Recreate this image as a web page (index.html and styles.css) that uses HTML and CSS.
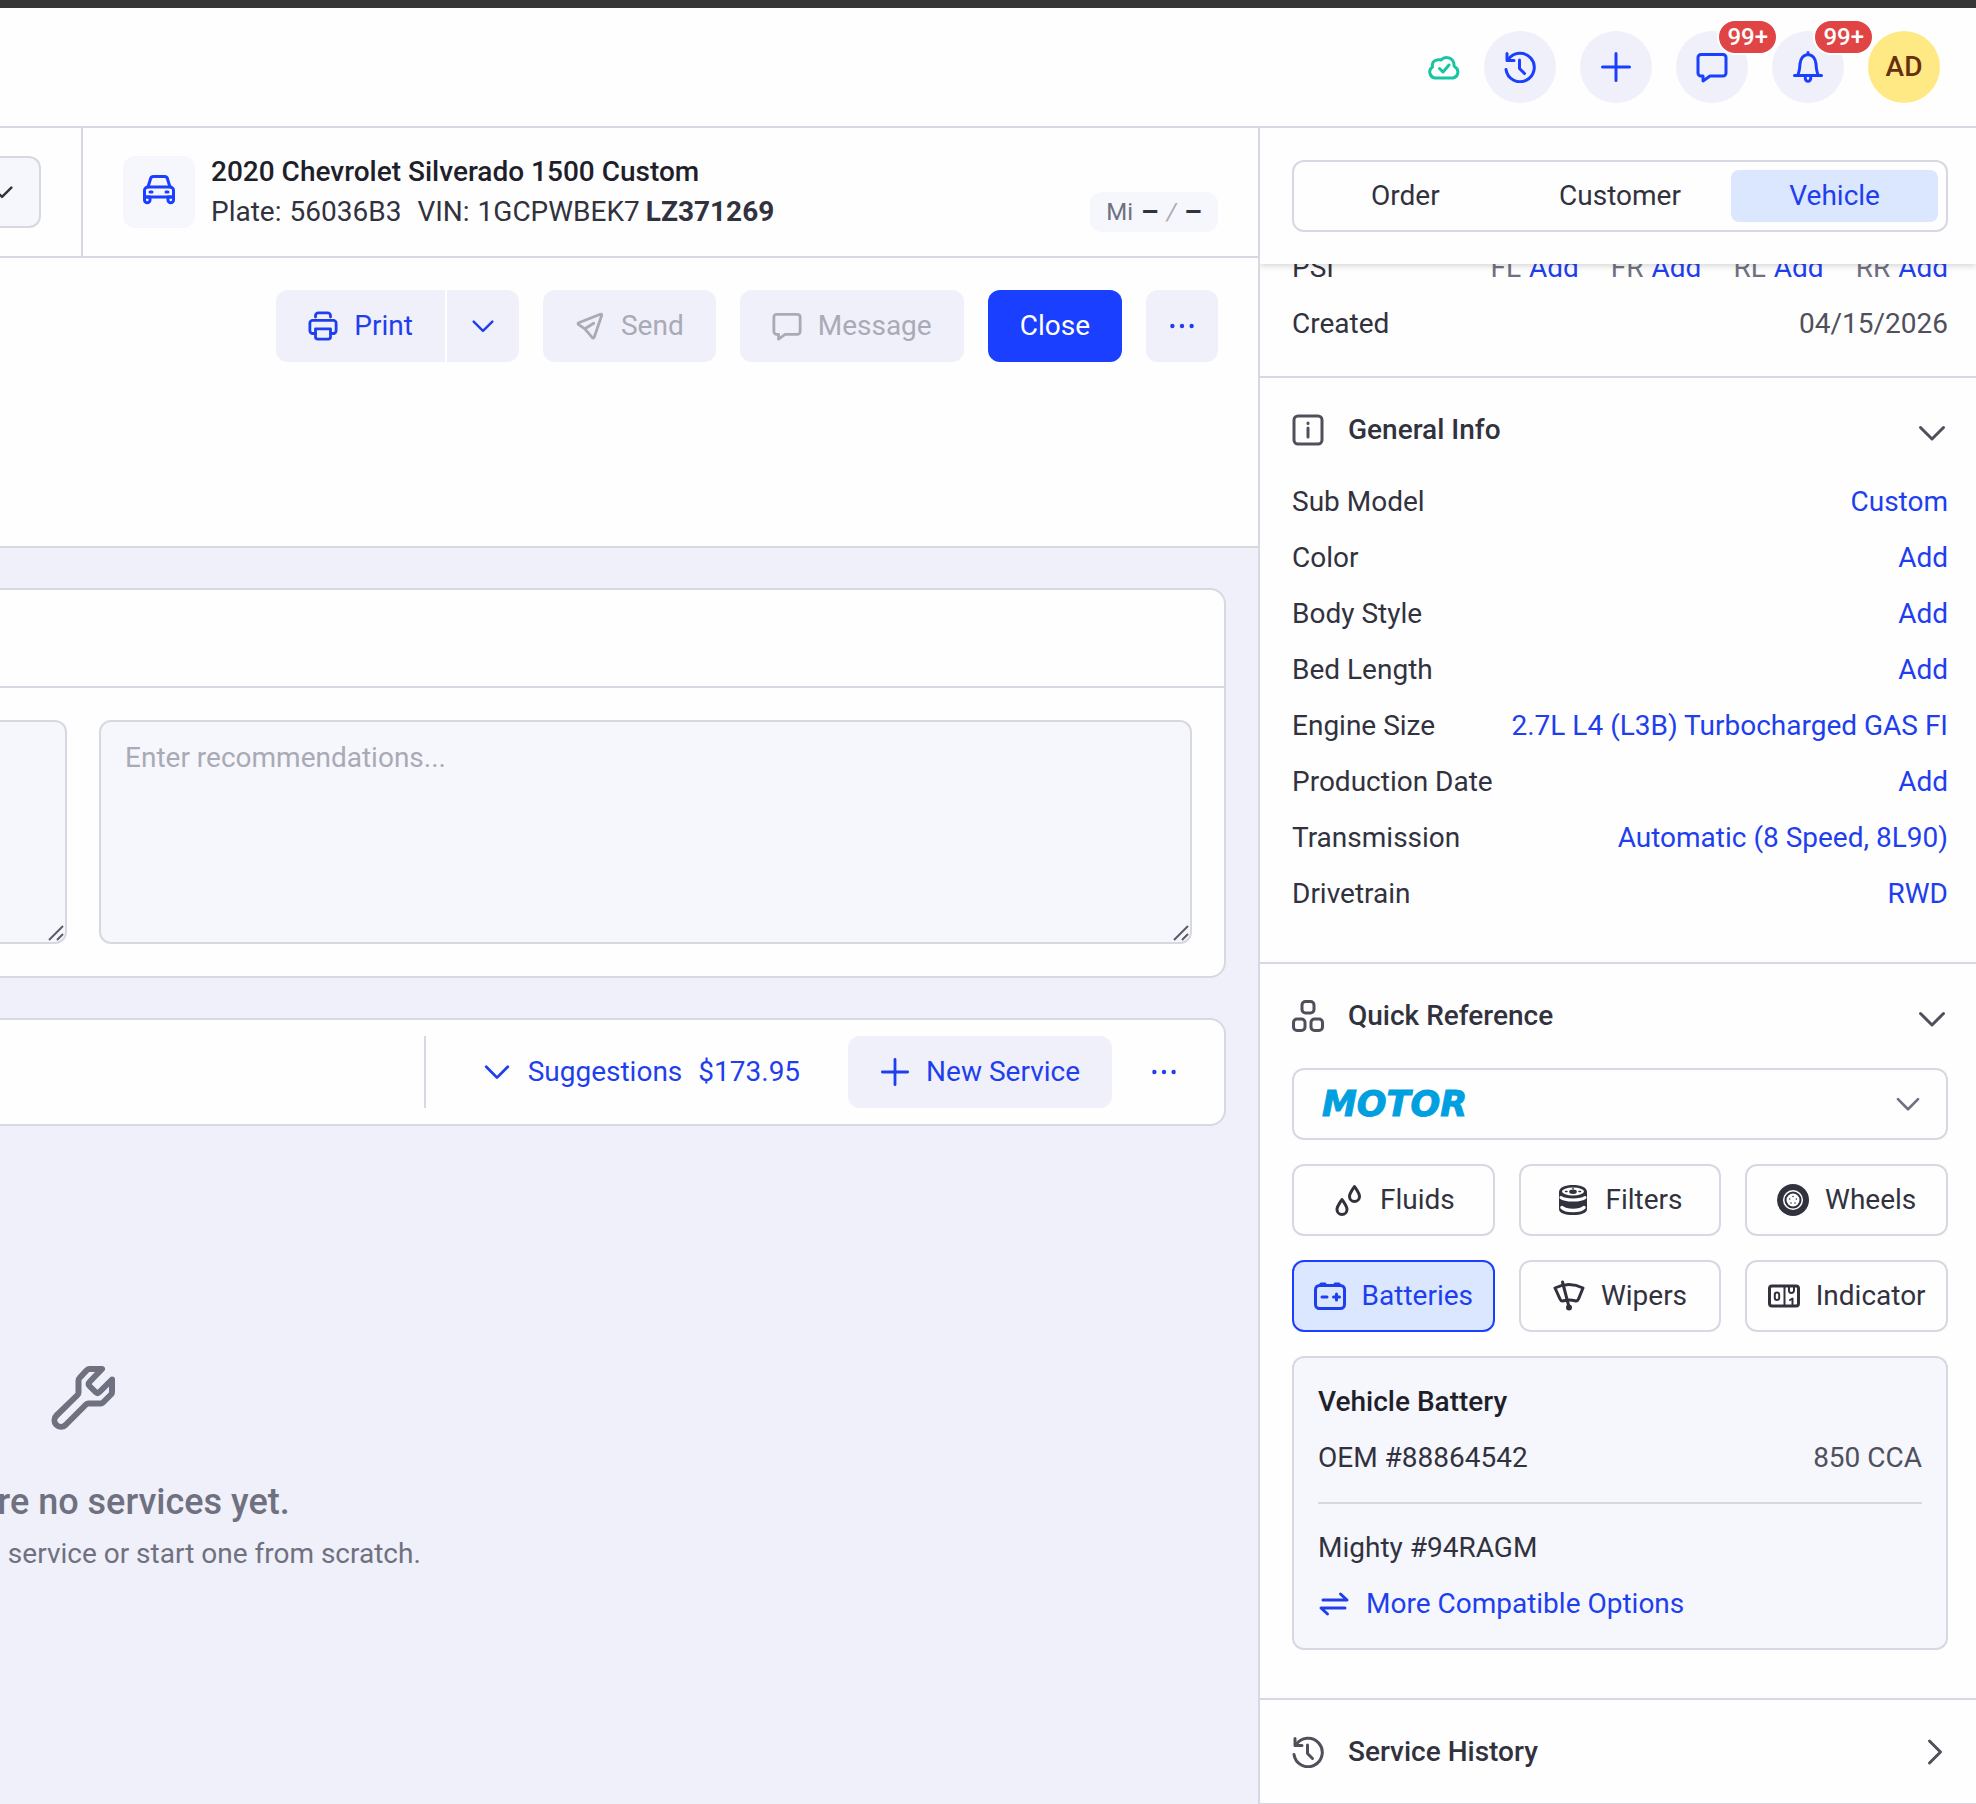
FILE: index.html
```html
<!DOCTYPE html>
<html lang="en">
<head>
<meta charset="utf-8">
<meta name="viewport" content="width=device-width, initial-scale=1">
<title>Order</title>
<link rel="stylesheet" href="styles.css">
</head>
<body>
<svg class="sprite" aria-hidden="true">
  <symbol id="i-cloud" viewBox="0 0 32 32"><path d="M8 27A6 6 0 0 1 4.500 16Q3.500 9.500 10 8.800Q12 8.500 13 9A7.500 7.500 0 0 1 26 13Q25.500 15 27 16A6 6 0 0 1 25 27Z"/><path d="M11.500 17.500l3.500 3.500 6-7"/></symbol>
  <symbol id="i-history" viewBox="0 0 32 32"><path d="M2 18.500A14.200 14.200 0 1 0 4 9"/><path d="M3 2.500V9.500H10"/><path d="M15.500 9v8.500l5 5"/></symbol>
  <symbol id="i-plus" viewBox="0 0 32 32"><path d="M16 2.500v27M2.500 16h27"/></symbol>
  <symbol id="i-chat" viewBox="0 0 32 32"><path d="M5 3.500H27A3 3 0 0 1 30 6.500V22A3 3 0 0 1 27 25H14L7 30V25H5A3 3 0 0 1 2 22V6.500A3 3 0 0 1 5 3.500Z"/></symbol>
  <symbol id="i-bell" viewBox="0 0 32 32"><path d="M2.500 24.500H29.500"/><path d="M16 1.500V3.500C11 4 8.500 8 8 13C7.700 18 7.500 21 5.500 24.500M16 3.500C21 4 23.500 8 24 13C24.300 18 24.500 21 26.500 24.500"/><path d="M13.300 25v2.500a2.700 2.700 0 0 0 5.400 0V25"/></symbol>
  <symbol id="i-chevron" viewBox="0 0 32 32"><path d="M4.500 10.500 16 22 27.500 10.500"/></symbol>
  <symbol id="i-chevron-right" viewBox="0 0 32 32"><path d="M13.500 5 24.500 16 13.500 27"/></symbol>
  <symbol id="i-car" viewBox="0 0 32 32"><path d="M5 13 7.500 5A3 3 0 0 1 10.500 2.500H21.500A3 3 0 0 1 24.500 5L27 13"/><path d="M5 13H27A3.500 3.500 0 0 1 30.500 16.500V23H1.500V16.500A3.500 3.500 0 0 1 5 13Z"/><path d="M7 18h2M23 18h2"/><path d="M1.500 23H7V26a2.700 2.700 0 0 1-5.500 0ZM25 23h5.500V26a2.700 2.700 0 0 1-5.500 0Z"/></symbol>
  <symbol id="i-printer" viewBox="0 0 32 32"><path d="M8 6.500V5A3 3 0 0 1 11 2H21A3 3 0 0 1 24 5V6.500"/><path d="M8 24H5A3 3 0 0 1 2 21V13A3 3 0 0 1 5 10H27A3 3 0 0 1 30 13V21A3 3 0 0 1 27 24H24"/><path d="M8 19H24V27.500A2.500 2.500 0 0 1 21.500 30H10.500A2.500 2.500 0 0 1 8 27.500Z"/></symbol>
  <symbol id="i-send" viewBox="0 0 32 32"><path d="M27 3.500 4 12.500Q2.500 13.500 4 14.500L10.500 19 18.500 28.500Q19.800 29.500 20.500 28L28.500 4.500Q28.500 3 27 3.500ZM10.500 19 20 13"/></symbol>
  <symbol id="i-dots" viewBox="0 0 32 32"><g fill="currentColor" stroke="none"><circle cx="5" cy="16" r="2.500"/><circle cx="16" cy="16" r="2.500"/><circle cx="27" cy="16" r="2.500"/></g></symbol>
  <symbol id="i-wrench" viewBox="0 0 64 64"><path d="M51 3H38.500Q37 3 36 4L28.500 12Q27.500 13 27.500 14.500V26.500Q27.500 28 26.500 29L5.500 49.500A6.400 6.400 0 0 0 14.500 59L35 38.500Q36 37.500 37.500 37.500H49.500Q51 37.500 52 36.500L60 28.500Q61 27.500 61 26V13.500L48.500 26Q46.500 28 44.500 26L38.500 20Q36.500 18 38.500 16Z"/></symbol>
  <symbol id="i-info" viewBox="0 0 32 32"><rect x="2" y="2" width="28" height="28" rx="4"/><path d="M16 14v9M16 9v.500"/></symbol>
  <symbol id="i-blocks" viewBox="0 0 32 32"><rect x="10" y="1.500" width="12" height="11.500" rx="3.500"/><rect x="1.500" y="19" width="11.500" height="11.500" rx="3.500"/><rect x="19" y="19" width="11.500" height="11.500" rx="3.500"/></symbol>
  <symbol id="i-drops" viewBox="0 0 32 32"><path d="M22.500 2.500C19.500 7 17.500 9.500 17.500 12.500A5 5 0 0 0 27.500 12.500C27.500 9.500 25.500 7 22.500 2.500Z"/><path d="M10 15.500C7 20 5 22.500 5 25.500A5 5 0 0 0 15 25.500C15 22.500 13 20 10 15.500Z"/></symbol>
  <symbol id="i-filter" viewBox="0 0 32 32"><path fill="currentColor" stroke="none" d="M2 8C2 3.500 8 1 16 1S30 3.500 30 8V25C30 29 24 31 16 31S2 29 2 25Z"/><ellipse cx="16" cy="7.500" rx="11" ry="4" fill="#fff" stroke="none"/><ellipse cx="16" cy="7.800" rx="3.800" ry="2.200" fill="currentColor" stroke="none"/><path stroke-width="1.500" d="M8.500 7.500h1.500M22 7.500h1.500M16 4.200v.500"/><path stroke="#fff" stroke-width="3" d="M4 13.500C8 16.800 24 16.800 28 13.500"/><path stroke="#fff" stroke-width="3.500" d="M5 23.500C9 27.500 23 27.500 27 23.500"/></symbol>
  <symbol id="i-wheel" viewBox="0 0 32 32"><circle cx="16" cy="16" r="16" fill="currentColor" stroke="none"/><circle cx="16" cy="16" r="9.300" stroke="#fff" stroke-width="1.500"/><circle cx="16" cy="16" r="6.500" fill="#fff" stroke="none"/><g fill="currentColor" stroke="none"><circle cx="16" cy="12.500" r=".8"/><circle cx="12.700" cy="15" r=".8"/><circle cx="19.300" cy="15" r=".8"/><circle cx="14" cy="19" r=".8"/><circle cx="18" cy="19" r=".8"/></g></symbol>
  <symbol id="i-battery" viewBox="0 0 32 32"><rect x="1.500" y="5.500" width="29" height="23" rx="4"/><path d="M7 4h4M21 4h4M8 17h5M19.500 17h6M22.500 14v6"/></symbol>
  <symbol id="i-wiper" viewBox="0 0 32 32"><path d="M2 8Q16 1 30 8L25.500 19Q24.500 21.500 22 20.800Q16 19 10.500 20.800Q8 21.500 7 19Z"/><path d="M9.500 2 16 27"/><circle cx="16" cy="27.500" r="3" fill="currentColor" stroke="none"/></symbol>
  <symbol id="i-counter" viewBox="0 0 32 32"><rect x="1.500" y="6" width="29" height="20" rx="2.500"/><path stroke-width="2" d="M16.500 6V26"/><rect stroke-width="2" x="6.800" y="12.500" width="4.400" height="7.500" rx="2.200"/><path stroke-width="2" d="M21 6v4.500a2.500 2.500 0 0 0 5 0V6M22 20l2.500-1.500V26"/></symbol>
  <symbol id="i-swap" viewBox="0 0 32 32"><path d="M5 12H29L22.500 6M27 20H3L9.500 26"/></symbol>
</svg>

<div class="app">
  <header class="topbar">
    <svg class="icon sync"><use href="#i-cloud"/></svg>
    <button class="round" aria-label="Recent"><svg class="icon"><use href="#i-history"/></svg></button>
    <button class="round" aria-label="Create"><svg class="icon"><use href="#i-plus"/></svg></button>
    <button class="round" aria-label="Messages"><svg class="icon"><use href="#i-chat"/></svg><span class="badge">99+</span></button>
    <button class="round" aria-label="Notifications"><svg class="icon"><use href="#i-bell"/></svg><span class="badge">99+</span></button>
    <button class="round avatar">AD</button>
  </header>

  <div class="workspace">
    <main class="main">
      <div class="context">
        <div class="context-customer">
          <button class="customer-toggle" aria-label="Change customer"><svg class="icon small"><use href="#i-chevron"/></svg></button>
        </div>
        <div class="context-vehicle">
          <span class="vehicle-icon"><svg class="icon"><use href="#i-car"/></svg></span>
          <div class="vehicle-text">
            <h1>2020 Chevrolet Silverado 1500 Custom</h1>
            <p><span class="pair"><span>Plate:</span><span>56036B3</span></span><span class="pair"><span>VIN:</span><span>1GCPWBEK7<b>LZ371269</b></span></span></p>
          </div>
          <div class="mileage">Mi <b>–</b><i>/</i><b>–</b></div>
        </div>
      </div>

      <div class="toolbar">
        <div class="split">
          <button class="btn"><svg class="icon"><use href="#i-printer"/></svg>Print</button>
          <button class="btn square" aria-label="Print options"><svg class="icon small"><use href="#i-chevron"/></svg></button>
        </div>
        <button class="btn" disabled><svg class="icon"><use href="#i-send"/></svg>Send</button>
        <button class="btn" disabled><svg class="icon"><use href="#i-chat"/></svg>Message</button>
        <button class="btn primary">Close</button>
        <button class="btn square" aria-label="More"><svg class="icon dots"><use href="#i-dots"/></svg></button>
      </div>

      <div class="canvas">
        <section class="card">
          <div class="card-head"></div>
          <div class="notes">
            <div class="note note-cut">
              <textarea aria-label="Concerns"></textarea>
              <svg class="grip" viewBox="0 0 16 16"><path d="M1 15 15 1M9 15l6-6"/></svg>
            </div>
            <div class="note">
              <textarea aria-label="Recommendations" placeholder="Enter recommendations..."></textarea>
              <svg class="grip" viewBox="0 0 16 16"><path d="M1 15 15 1M9 15l6-6"/></svg>
            </div>
          </div>
        </section>

        <section class="card services">
          <button class="suggestions"><svg class="icon"><use href="#i-chevron"/></svg><span>Suggestions</span><span>$173.95</span></button>
          <button class="btn"><svg class="icon"><use href="#i-plus"/></svg>New Service</button>
          <button class="btn square plain" aria-label="More"><svg class="icon dots"><use href="#i-dots"/></svg></button>
        </section>

        <div class="empty">
          <svg class="icon wrench"><use href="#i-wrench"/></svg>
          <h2>There are no services yet.</h2>
          <p>Browse for a canned service or start one from scratch.</p>
        </div>
      </div>
    </main>

    <aside class="panel">
      <div class="tabs">
        <div class="segmented">
          <button>Order</button>
          <button>Customer</button>
          <button class="active">Vehicle</button>
        </div>
      </div>

      <div class="panel-body">
        <section class="section first">
          <dl>
            <div><dt>PSI</dt><dd class="psi"><span class="pair">FL <a href="#">Add</a></span><span class="pair">FR <a href="#">Add</a></span><span class="pair">RL <a href="#">Add</a></span><span class="pair">RR <a href="#">Add</a></span></dd></div>
            <div><dt>Created</dt><dd>04/15/2026</dd></div>
          </dl>
        </section>

        <section class="section">
          <h3><svg class="icon"><use href="#i-info"/></svg><span>General Info</span><svg class="icon caret"><use href="#i-chevron"/></svg></h3>
          <dl>
            <div><dt>Sub Model</dt><dd><a href="#">Custom</a></dd></div>
            <div><dt>Color</dt><dd><a href="#">Add</a></dd></div>
            <div><dt>Body Style</dt><dd><a href="#">Add</a></dd></div>
            <div><dt>Bed Length</dt><dd><a href="#">Add</a></dd></div>
            <div><dt>Engine Size</dt><dd><a href="#">2.7L L4 (L3B) Turbocharged GAS FI</a></dd></div>
            <div><dt>Production Date</dt><dd><a href="#">Add</a></dd></div>
            <div><dt>Transmission</dt><dd><a href="#">Automatic (8 Speed, 8L90)</a></dd></div>
            <div><dt>Drivetrain</dt><dd><a href="#">RWD</a></dd></div>
          </dl>
        </section>

        <section class="section reference">
          <h3><svg class="icon"><use href="#i-blocks"/></svg><span>Quick Reference</span><svg class="icon caret"><use href="#i-chevron"/></svg></h3>
          <div class="provider">
            <select aria-label="Data provider"><option>MOTOR</option></select>
            <svg class="icon"><use href="#i-chevron"/></svg>
          </div>
          <div class="tiles">
            <button><svg class="icon"><use href="#i-drops"/></svg>Fluids</button>
            <button><svg class="icon"><use href="#i-filter"/></svg>Filters</button>
            <button><svg class="icon"><use href="#i-wheel"/></svg>Wheels</button>
            <button class="active"><svg class="icon"><use href="#i-battery"/></svg>Batteries</button>
            <button><svg class="icon"><use href="#i-wiper"/></svg>Wipers</button>
            <button><svg class="icon"><use href="#i-counter"/></svg>Indicator</button>
          </div>
          <div class="result">
            <h4>Vehicle Battery</h4>
            <p class="line"><span>OEM #88864542</span><span class="spec">850 CCA</span></p>
            <hr>
            <p class="line">Mighty #94RAGM</p>
            <a class="more" href="#"><svg class="icon"><use href="#i-swap"/></svg>More Compatible Options</a>
          </div>
        </section>

        <section class="section history">
          <h3><svg class="icon"><use href="#i-history"/></svg><span>Service History</span><svg class="icon"><use href="#i-chevron-right"/></svg></h3>
        </section>
      </div>
    </aside>
  </div>
</div>
</body>
</html>
```

FILE: styles.css
```css
:root {
  --blue: #1a3fff;
  --blue-text: #1f3fee;
  --blue-soft: #dbe6ff;
  --ink: #1f1f2b;
  --text: #32323f;
  --muted: #50505c;
  --grey: #6f7180;
  --faint: #a9aab6;
  --line: #d7d8e2;
  --lavender: #eff0fa;
  --field: #f6f7fc;
}

* { box-sizing: border-box; }

body {
  margin: 0;
  background: #fefefe;
  color: var(--text);
  font: 400 28px/40px Roboto, "Liberation Sans", sans-serif;
}

h1, h2, h3, h4, p, dl, dd { margin: 0; }
h1, h3, h4 { font-size: 28px; font-weight: 500; line-height: 40px; }
a { color: var(--blue-text); text-decoration: none; }

button, textarea, select {
  margin: 0;
  border: 0;
  padding: 0;
  background: none;
  color: inherit;
  font: inherit;
}
button { cursor: pointer; }

.sprite { position: absolute; width: 0; height: 0; }

.icon {
  flex: none;
  width: 32px;
  height: 32px;
  fill: none;
  stroke: currentColor;
  stroke-width: 3;
  stroke-linecap: round;
  stroke-linejoin: round;
}
.icon.small { width: 26px; height: 26px; }
.icon.dots { width: 28px; height: 28px; }

.pair { display: flex; gap: 8px; }

.app {
  display: flex;
  flex-direction: column;
  min-height: 100vh;
  overflow: hidden;
}

/* Top bar */
.topbar {
  display: flex;
  align-items: center;
  justify-content: flex-end;
  gap: 24px;
  height: 128px;
  padding: 0 36px;
  border-top: 8px solid #363636;
  border-bottom: 2px solid var(--line);
}
.sync { color: #16c5a1; }
.round {
  position: relative;
  display: flex;
  align-items: center;
  justify-content: center;
  width: 72px;
  height: 72px;
  border-radius: 50%;
  background: var(--lavender);
  color: var(--blue);
}
.avatar {
  background: #ffe985;
  color: #66300f;
  font-weight: 500;
}
.badge {
  position: absolute;
  top: -12px;
  right: -30px;
  z-index: 1;
  border: 2px solid #fff;
  border-radius: 18px;
  padding: 0 8px;
  background: #e04444;
  color: #fff;
  font-size: 24px;
  font-weight: 500;
  line-height: 32px;
}

.workspace { display: flex; flex: 1; }
.main {
  display: flex;
  flex: 1;
  flex-direction: column;
  min-width: 0;
}

/* Customer and vehicle bar */
.context { display: flex; border-bottom: 2px solid var(--line); }
.context-customer {
  width: 83px;
  padding: 28px 0 24px;
  border-right: 2px solid var(--line);
}
.customer-toggle {
  display: flex;
  align-items: center;
  justify-content: flex-end;
  width: 41px;
  height: 72px;
  padding-right: 24px;
  border: 2px solid var(--line);
  border-left: 0;
  border-radius: 0 12px 12px 0;
  background: var(--field);
}
.context-vehicle {
  display: flex;
  flex: 1;
  gap: 16px;
  padding: 24px 40px;
}
.vehicle-icon {
  display: flex;
  align-items: center;
  justify-content: center;
  width: 72px;
  height: 72px;
  margin-top: 4px;
  padding-bottom: 4px;
  border-radius: 12px;
  background: var(--field);
  color: var(--blue);
}
.vehicle-text { flex: 1; white-space: nowrap; }
.vehicle-text h1 { color: var(--ink); }
.vehicle-text p { display: flex; gap: 16px; }
.vehicle-text b { margin-left: 6px; }
.mileage {
  display: flex;
  align-self: flex-end;
  gap: 8px;
  padding: 0 16px;
  border-radius: 12px;
  background: var(--field);
  color: var(--grey);
  font-size: 24px;
}
.mileage b { color: var(--text); font-size: 28px; }
.mileage i { color: var(--faint); }

/* Toolbar */
.toolbar {
  display: flex;
  justify-content: flex-end;
  gap: 24px;
  padding: 32px 40px 184px;
  border-bottom: 2px solid var(--line);
}
.btn {
  display: flex;
  align-items: center;
  justify-content: center;
  gap: 16px;
  height: 72px;
  padding: 0 32px;
  border-radius: 12px;
  background: var(--lavender);
  color: var(--blue-text);
}
.btn:not(.square) .icon { width: 30px; height: 30px; }
.btn:disabled { color: var(--faint); }
.btn.primary { background: var(--blue); color: #fff; }
.btn.square { width: 72px; padding: 0; }
.btn.plain { background: none; }
.split { display: flex; gap: 2px; }
.split .btn:first-child { border-radius: 12px 0 0 12px; }
.split .btn:last-child { border-radius: 0 12px 12px 0; }

/* Order canvas */
.canvas {
  flex: 1;
  padding: 40px 32px 40px 0;
  background: var(--lavender);
}
.card {
  border: 2px solid var(--line);
  border-left: 0;
  border-radius: 0 16px 16px 0;
  background: #fefefe;
}
.card-head { height: 98px; border-bottom: 2px solid var(--line); }
.notes { display: flex; gap: 32px; padding: 32px 32px 32px 0; }
.note { position: relative; flex: 1; height: 224px; }
.note textarea {
  display: block;
  width: 100%;
  height: 100%;
  padding: 16px 24px;
  border: 2px solid var(--line);
  border-radius: 12px;
  background: var(--field);
  resize: none;
}
.note textarea::placeholder { color: var(--faint); opacity: 1; }
.note-cut { flex: 0 0 67px; }
.note-cut textarea { border-left: 0; border-radius: 0 12px 12px 0; }
.grip {
  position: absolute;
  right: 3px;
  bottom: 3px;
  width: 16px;
  height: 16px;
  fill: none;
  stroke: #5c5d66;
  stroke-width: 2;
}

.services {
  display: flex;
  justify-content: flex-end;
  gap: 16px;
  margin-top: 40px;
  padding: 16px 24px 16px 0;
}
.suggestions {
  display: flex;
  align-items: center;
  gap: 16px;
  margin-right: 32px;
  padding-left: 56px;
  border-left: 2px solid var(--line);
  color: var(--blue-text);
}
.suggestions .icon { width: 30px; height: 30px; }

.empty {
  display: flex;
  flex-direction: column;
  align-items: center;
  width: 166px;
  margin-top: 240px;
  color: var(--grey);
  white-space: nowrap;
}
.wrench { width: 64px; height: 64px; stroke-width: 6; }
.empty h2 {
  margin: 48px 0 8px;
  font-size: 36px;
  font-weight: 500;
  line-height: 48px;
}

/* Side panel */
.panel {
  flex: 0 0 718px;
  border-left: 2px solid var(--line);
}
.tabs {
  position: relative;
  z-index: 1;
  padding: 32px 28px 32px 32px;
  background: #fefefe;
  box-shadow: 0 2px 6px rgba(31, 31, 43, 0.18);
  clip-path: inset(0 0 -12px 0);
}
.segmented {
  display: grid;
  grid-template-columns: repeat(3, 1fr);
  gap: 8px;
  padding: 8px;
  border: 2px solid var(--line);
  border-radius: 12px;
}
.segmented button { height: 52px; border-radius: 8px; }
.segmented .active { background: var(--blue-soft); color: var(--blue-text); }

.panel-body { margin-top: -24px; }
.section {
  padding: 32px 28px 40px 32px;
  border-bottom: 2px solid var(--line);
}
.section.first { padding-top: 0; padding-bottom: 24px; }
.section h3 {
  display: flex;
  align-items: center;
  gap: 24px;
  margin-bottom: 24px;
}
.section h3 span { flex: 1; }
.section h3 .icon { color: var(--muted); }
.section h3 .caret { margin-top: 6px; }
.section dl > div {
  display: flex;
  align-items: center;
  justify-content: space-between;
  height: 56px;
}
.section dd { color: var(--muted); }
.section .psi { display: flex; gap: 32px; color: var(--grey); }

.section.reference { padding-bottom: 48px; }
.reference h3 { margin-bottom: 32px; }
.provider {
  display: grid;
  align-items: center;
  height: 72px;
  margin-bottom: 24px;
}
.provider select, .provider .icon { grid-area: 1 / 1; }
.provider select {
  width: 100%;
  height: 72px;
  padding: 0 28px;
  border: 2px solid var(--line);
  border-radius: 12px;
  appearance: none;
  color: #009fdf;
  font: italic 700 35px/40px "DejaVu Sans", sans-serif;
  -webkit-text-stroke: 1px #009fdf;
}
.provider .icon {
  justify-self: end;
  width: 28px;
  height: 28px;
  margin-right: 26px;
  color: var(--grey);
  pointer-events: none;
}

.tiles {
  display: grid;
  grid-template-columns: repeat(3, 1fr);
  gap: 24px;
  margin-bottom: 24px;
}
.tiles button {
  display: flex;
  align-items: center;
  justify-content: center;
  gap: 16px;
  height: 72px;
  border: 2px solid var(--line);
  border-radius: 12px;
}
.tiles .active {
  border-color: var(--blue);
  background: var(--blue-soft);
  color: var(--blue-text);
}

.result {
  padding: 16px 24px;
  border: 2px solid var(--line);
  border-radius: 12px;
  background: var(--field);
}
.result h4 { color: var(--ink); line-height: 56px; }
.line { display: flex; justify-content: space-between; line-height: 56px; }
.spec { color: var(--muted); }
.result hr {
  height: 2px;
  margin: 16px 0;
  border: 0;
  background: var(--line);
}
.more { display: flex; align-items: center; gap: 16px; line-height: 56px; }

.section.history { padding-bottom: 31px; border-bottom-width: 1px; }
.history h3 { margin-bottom: 0; }
```
